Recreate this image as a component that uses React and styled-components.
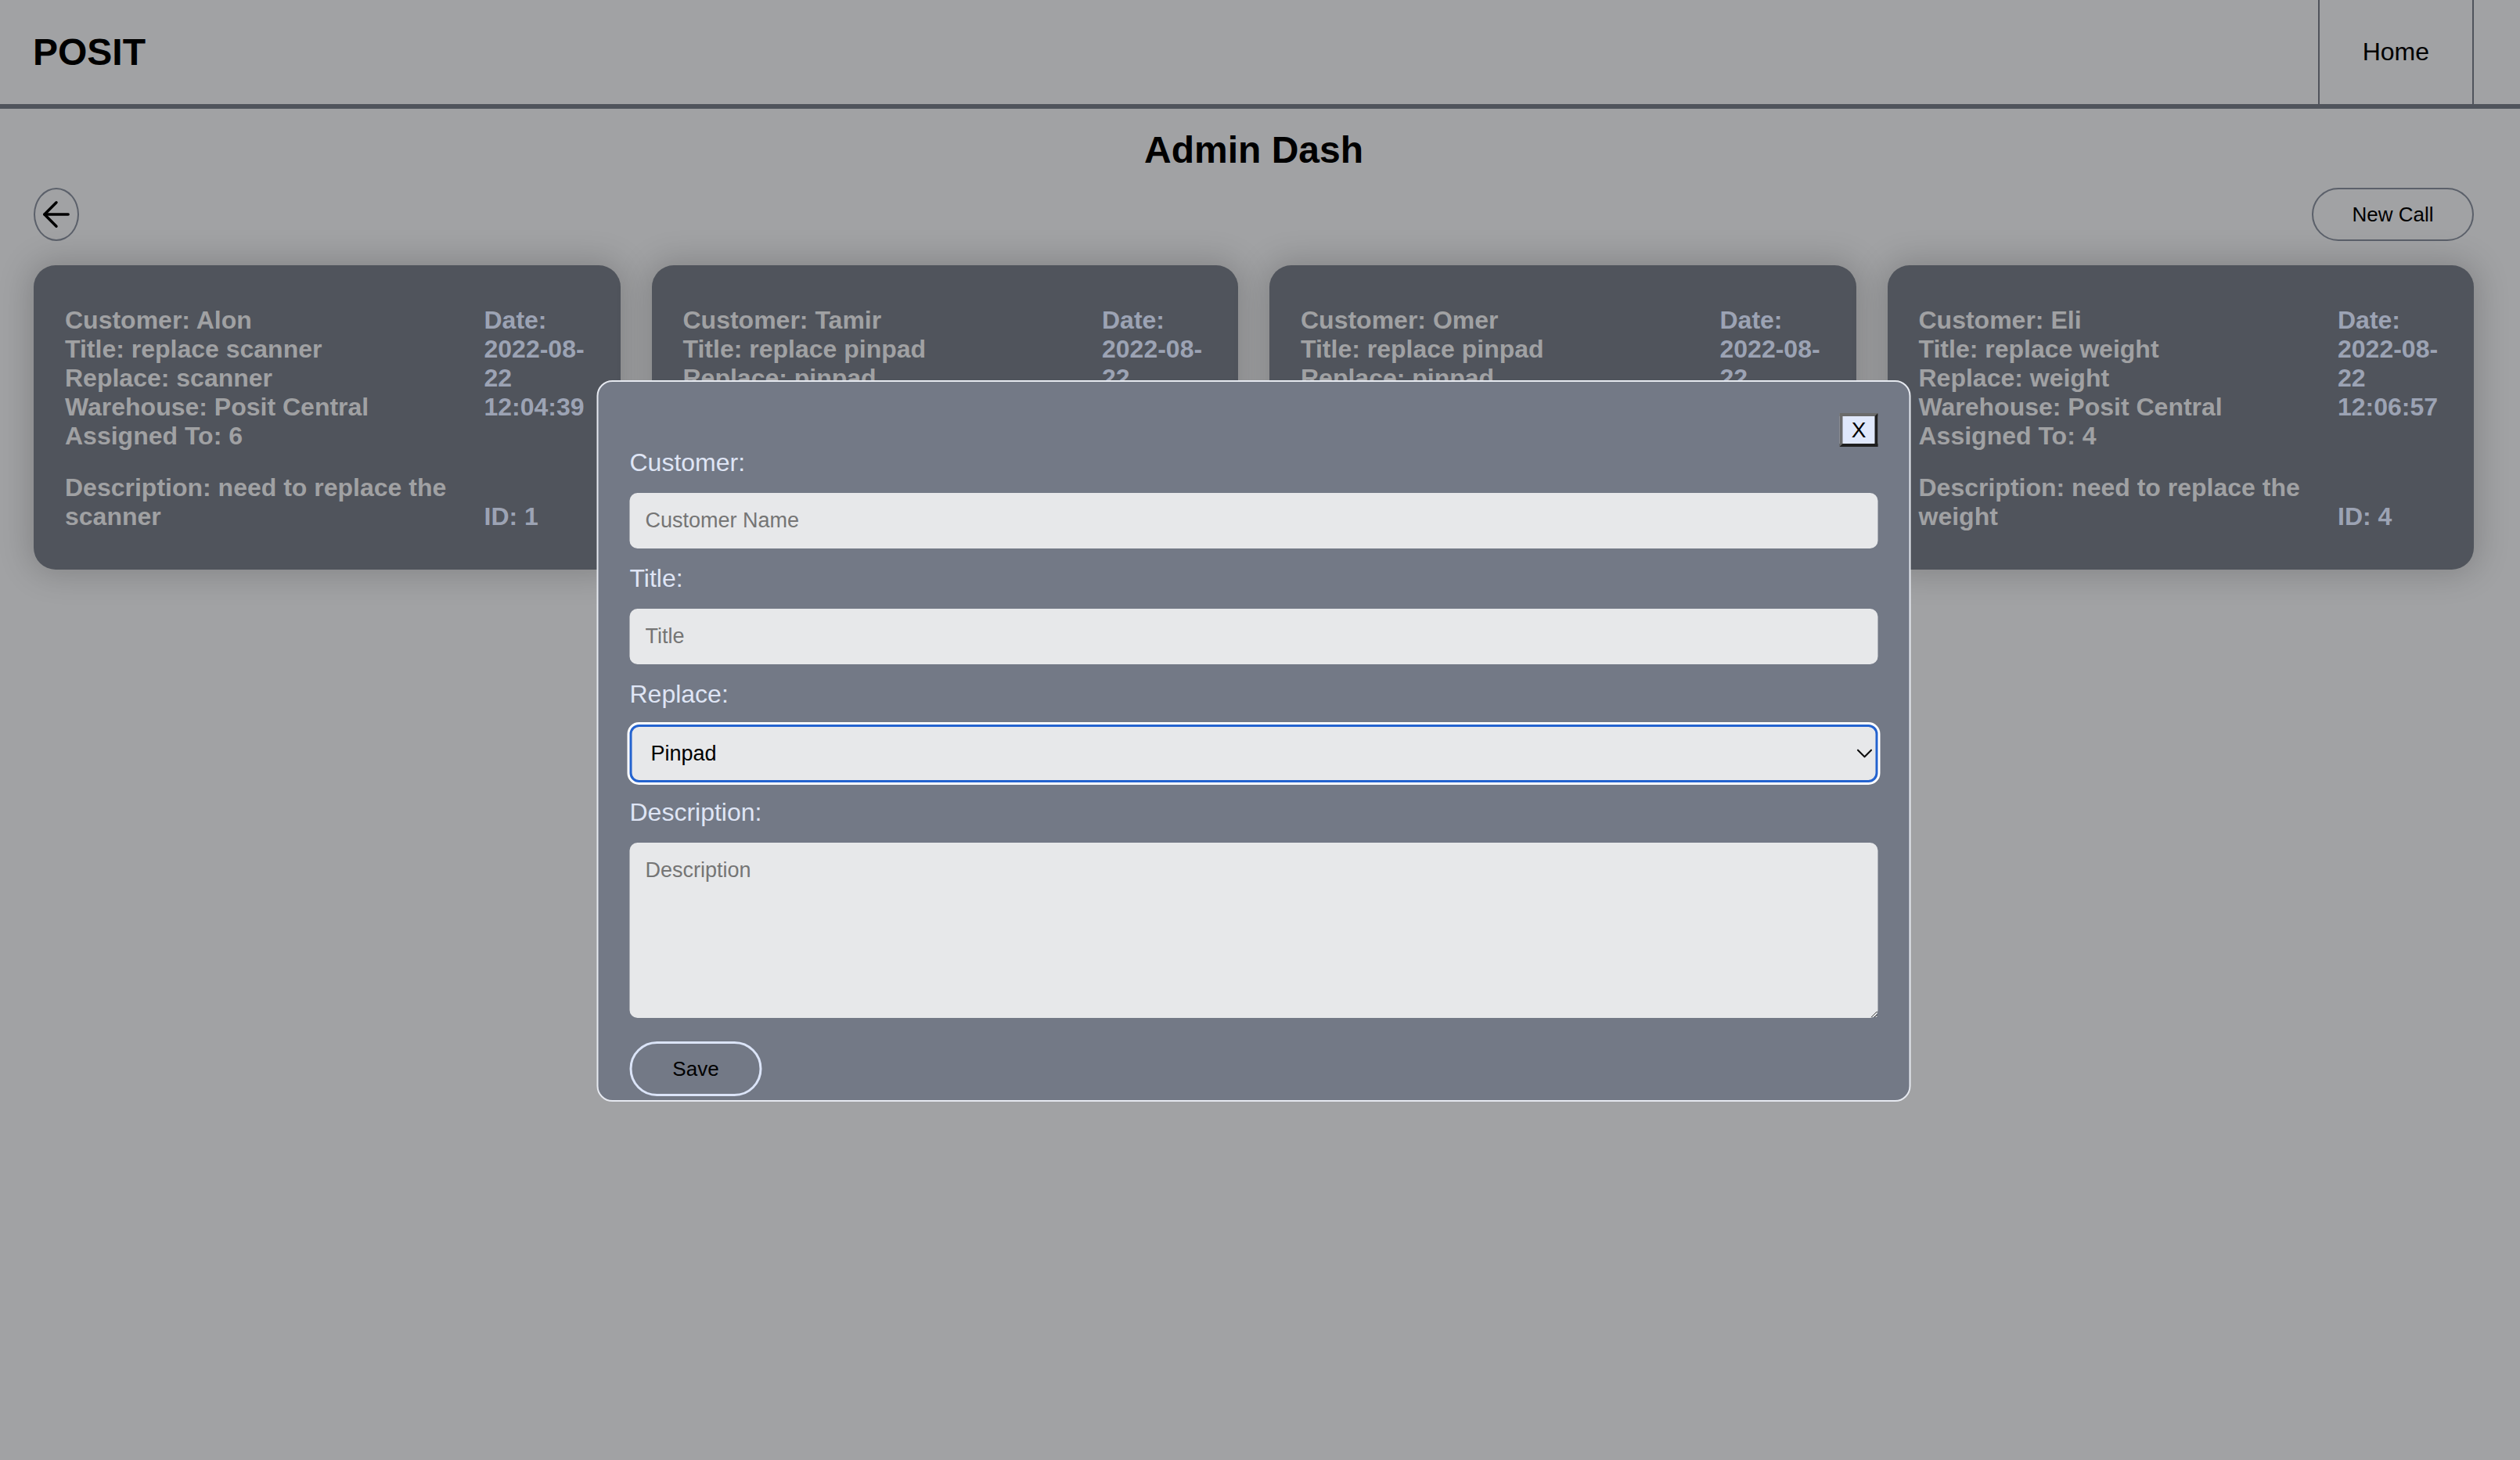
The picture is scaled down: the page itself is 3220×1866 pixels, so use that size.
import React from "react";
import styled, { createGlobalStyle } from "styled-components";
import { ArrowLeft, ChevronDown } from "lucide-react";

const GlobalStyle = createGlobalStyle`
  * {
    box-sizing: border-box;
  }
  html, body {
    margin: 0;
    padding: 0;
    background: #a1a2a4;
  }
  body {
    min-height: 100vh;
    font-family: "Liberation Sans", Arial, Helvetica, sans-serif;
  }
`;

// Header
const Header = styled.header`
  display: flex;
  align-items: center;
  justify-content: space-between;
  height: 139px;
  padding: 0 59px 0 42px;
  border-bottom: 6px solid #50545c;
`;

const Logo = styled.div`
  font-size: 48px;
  font-weight: 700;
  color: #000;
`;

const Nav = styled.nav`
  display: flex;
  align-self: stretch;
`;

const NavLink = styled.a`
  display: flex;
  align-items: center;
  padding: 0 55px;
  border-left: 2px solid #50545c;
  border-right: 2px solid #50545c;
  font-size: 32px;
  color: #000;
  text-decoration: none;
`;

// Page body
const Main = styled.main`
  padding: 25px 59px 0 43px;
`;

const Content = styled.div`
  position: relative;
`;

const PageTitle = styled.h1`
  margin: 0;
  text-align: center;
  font-size: 48px;
  font-weight: 700;
  line-height: normal;
  color: #000;
`;

const Toolbar = styled.div`
  display: flex;
  align-items: center;
  justify-content: space-between;
  margin-top: 21px;
`;

const BackButton = styled.button`
  display: flex;
  align-items: center;
  justify-content: center;
  width: 58px;
  height: 68px;
  padding: 0;
  border: 2px solid #5b606a;
  border-radius: 50%;
  background: transparent;
  color: #000;
`;

const PillButton = styled.button`
  width: ${(p) => p.w}px;
  height: ${(p) => p.h}px;
  padding: 0;
  border: ${(p) => p.bw}px solid ${(p) => p.bc};
  border-radius: ${(p) => p.h / 2}px;
  background: transparent;
  font-family: inherit;
  font-size: 26px;
  color: #000;
`;

const CardGrid = styled.div`
  display: grid;
  grid-template-columns: repeat(4, 1fr);
  gap: 40px;
  margin-top: 31px;
`;

const Card = styled.div`
  display: grid;
  grid-template-columns: 1fr 134px;
  row-gap: 29px;
  padding: 52px 40px 49px;
  border-radius: 28px;
  background: #50545c;
  box-shadow: 0 0 40px 6px rgba(0, 0, 0, 0.18);
  font-size: 32px;
  font-weight: 700;
  line-height: normal;
  color: #a0a1a3;
`;

const CardSide = styled.div`
  color: #9ca3b4;
  align-self: ${(p) => (p.bottom ? "end" : "start")};
`;

// Modal
const Modal = styled.div`
  position: absolute;
  top: 322px;
  left: 50%;
  transform: translateX(-50%);
  width: 1679px;
  display: flex;
  flex-direction: column;
  padding: 40px 40px 5px;
  border: 2px solid #e6e9f0;
  border-radius: 20px;
  background: #737986;
`;

const CloseRow = styled.div`
  display: flex;
  justify-content: flex-end;
  margin-bottom: 2px;
`;

const CloseButton = styled.button`
  width: 49px;
  height: 43px;
  padding: 0;
  border: 4px solid;
  border-color: #6a6a6a #1f1f1f #1f1f1f #6a6a6a;
  background: #e0e8fb;
  font-family: inherit;
  font-size: 28px;
  line-height: 1;
  color: #000;
`;

const Label = styled.label`
  display: block;
  margin-bottom: 20px;
  font-size: 32px;
  line-height: normal;
  color: #dfe5f5;
`;

const TextInput = styled.input`
  width: 100%;
  height: 71px;
  margin: 0 0 20px;
  padding: 0 20px;
  border: none;
  border-radius: 10px;
  background: #e7e8ea;
  font-family: inherit;
  font-size: 27px;
  color: #000;
  &::placeholder {
    color: #757575;
  }
`;

const SelectWrap = styled.div`
  position: relative;
  margin-bottom: 20px;
  color: #111;
`;

const Select = styled.select`
  width: 100%;
  height: 74px;
  padding: 0 24px;
  border: 3px solid #2463cf;
  border-radius: 12px;
  box-shadow: 0 0 0 3px #ffffff;
  background: #e7e8ea;
  appearance: none;
  font-family: inherit;
  font-size: 27px;
  color: #000;
  outline: none;
`;

const SelectIcon = styled(ChevronDown)`
  position: absolute;
  right: 0;
  top: 50%;
  transform: translateY(-50%);
  pointer-events: none;
`;

const TextArea = styled.textarea`
  display: block;
  width: 100%;
  height: 224px;
  padding: 20px;
  border: none;
  border-radius: 10px;
  background: #e7e8ea;
  font-family: inherit;
  font-size: 27px;
  &::placeholder {
    color: #757575;
  }
`;

const SaveRow = styled.div`
  margin-top: 30px;
`;

const calls = [
  { id: 1, customer: "Alon", title: "replace scanner", replace: "scanner", assigned: 6, time: "12:04:39" },
  { id: 2, customer: "Tamir", title: "replace pinpad", replace: "pinpad", assigned: 5, time: "12:05:21" },
  { id: 3, customer: "Omer", title: "replace pinpad", replace: "pinpad", assigned: 6, time: "12:06:10" },
  { id: 4, customer: "Eli", title: "replace weight", replace: "weight", assigned: 4, time: "12:06:57" },
];

const CallCard = ({ call }) => (
  <Card>
    <div>
      Customer: {call.customer}
      <br />
      Title: {call.title}
      <br />
      Replace: {call.replace}
      <br />
      Warehouse: Posit Central
      <br />
      Assigned To: {call.assigned}
    </div>
    <CardSide>
      Date: 2022-08-<wbr />22 {call.time}
    </CardSide>
    <div>Description: need to replace the {call.replace}</div>
    <CardSide bottom>ID: {call.id}</CardSide>
  </Card>
);

export default function App() {
  return (
    <>
      <GlobalStyle />
      <Header>
        <Logo>POSIT</Logo>
        <Nav>
          <NavLink href="#">Home</NavLink>
        </Nav>
      </Header>
      <Main>
        <Content>
          <PageTitle>Admin Dash</PageTitle>
          <Toolbar>
            <BackButton>
              <ArrowLeft size={52} strokeWidth={1.6} />
            </BackButton>
            <PillButton w={207} h={68} bw={2} bc="#5b606a">
              New Call
            </PillButton>
          </Toolbar>
          <CardGrid>
            {calls.map((c) => (
              <CallCard key={c.id} call={c} />
            ))}
          </CardGrid>

          <Modal>
            <CloseRow>
              <CloseButton>X</CloseButton>
            </CloseRow>
            <Label>Customer:</Label>
            <TextInput placeholder="Customer Name" />
            <Label>Title:</Label>
            <TextInput placeholder="Title" />
            <Label>Replace:</Label>
            <SelectWrap>
              <Select defaultValue="pinpad">
                <option value="scanner">Scanner</option>
                <option value="pinpad">Pinpad</option>
                <option value="weight">Weight</option>
              </Select>
              <SelectIcon size={34} strokeWidth={1.5} />
            </SelectWrap>
            <Label>Description:</Label>
            <TextArea placeholder="Description" />
            <SaveRow>
              <PillButton w={169} h={70} bw={3} bc="#dbe4f8">
                Save
              </PillButton>
            </SaveRow>
          </Modal>
        </Content>
      </Main>
    </>
  );
}
